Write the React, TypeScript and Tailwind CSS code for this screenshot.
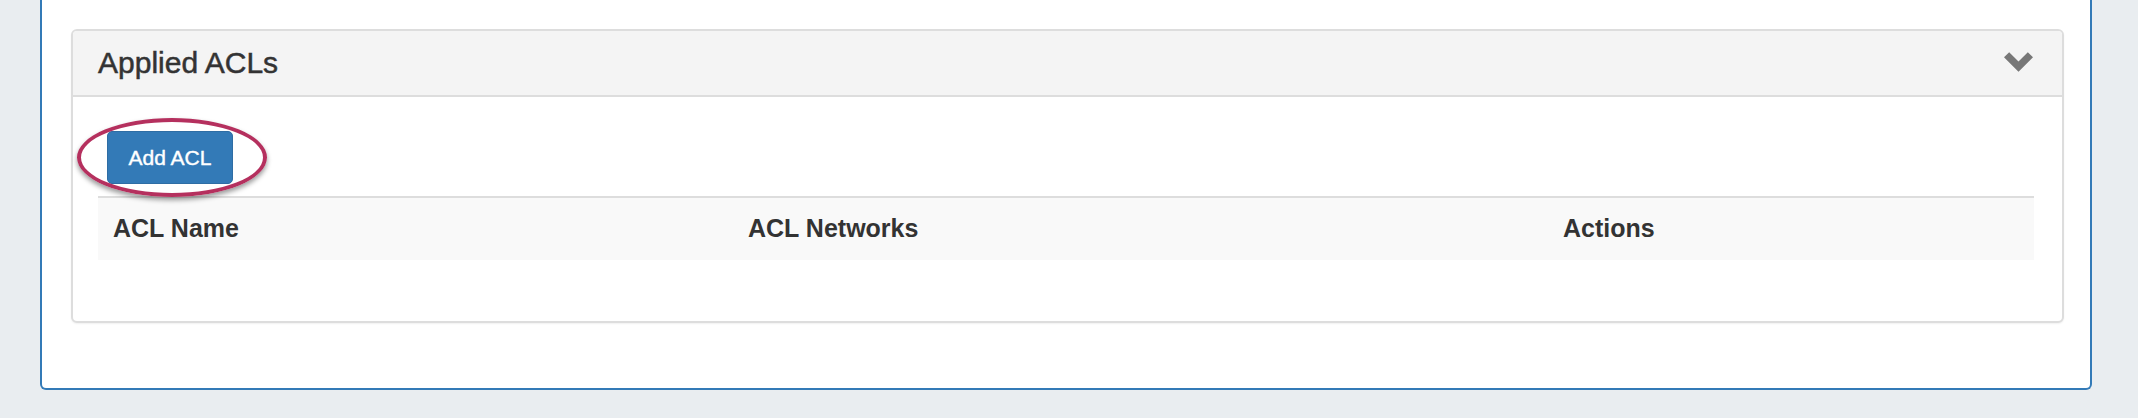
import React from "react";

export default function App() {
  return (
    <div className="w-[2138px] h-[418px] bg-[#e9edf0] pl-[40px] pr-[46px] font-['Liberation_Sans',Arial,sans-serif] text-[#333333]">
      <div className="bg-white border-2 border-t-0 border-[#337ab7] rounded-b-[6px] pt-[29px] pb-[65px] pl-[29px] pr-[26px]">
        <div className="border-2 border-[#dddddd] rounded-[6px] bg-white shadow-[0_1px_2px_rgba(0,0,0,0.06)]">
          <div className="h-[66px] bg-[#f4f4f4] border-b-2 border-[#dddddd] rounded-t-[4px] flex items-center justify-between pl-[25px] pr-[29px]">
            <span className="text-[30px] leading-none [-webkit-text-stroke:0.5px_#333333]">Applied ACLs</span>
            <svg width="29" height="20" viewBox="0 0 28 19" className="mt-[-2px]">
              <polygon points="0,5 5,0 14,9 23,0 28,5 14,19" fill="#777777" />
            </svg>
          </div>
          <div className="pt-[34px] pl-[25px] pr-[28px] pb-[61px]">
            <div className="relative inline-block ml-[9px] align-top">
              <button className="w-[126px] h-[53px] bg-[#337ab7] border border-[#2e6da4] rounded-[5px] text-white text-[21px] leading-none flex items-center justify-center [-webkit-text-stroke:0.4px_#ffffff]">
                Add ACL
              </button>
              <div className="pointer-events-none absolute left-[-30px] top-[-13px] w-[190px] h-[79px] rounded-[50%] border-[4px] border-[#b5305e] shadow-[0_3px_5px_rgba(0,0,0,0.4)]" />
            </div>
            <div className="mt-[12px] border-t-2 border-[#dddddd] bg-[#f9f9f9] h-[64px] grid grid-cols-[635px_815px_1fr] items-center text-[25px] font-bold">
              <div className="pl-[15px]">ACL Name</div>
              <div className="pl-[15px]">ACL Networks</div>
              <div className="pl-[15px]">Actions</div>
            </div>
          </div>
        </div>
      </div>
    </div>
  );
}
